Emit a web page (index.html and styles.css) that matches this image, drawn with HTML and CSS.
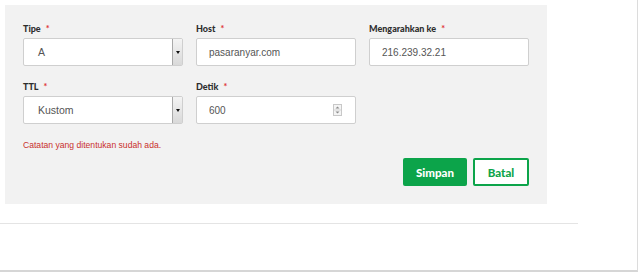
FILE: index.html
```html
<!DOCTYPE html>
<html lang="id">
<head>
    <meta charset="UTF-8">
    <meta name="viewport" content="width=device-width, initial-scale=1.0">
    <title>Edit Record</title>
    <link rel="stylesheet" href="styles.css">
</head>
<body>
    <div class="frame">
        <form class="record-panel">
            <div class="field-grid">
                <div class="field">
                    <label>Tipe <span class="req">*</span></label>
                    <div class="select-box">
                        <span class="select-value">A</span>
                        <span class="select-arrow"><i></i></span>
                    </div>
                </div>
                <div class="field">
                    <label>Host <span class="req">*</span></label>
                    <div class="text-box"><input type="text" value="pasaranyar.com"></div>
                </div>
                <div class="field">
                    <label>Mengarahkan ke <span class="req">*</span></label>
                    <div class="text-box"><input type="text" value="216.239.32.21"></div>
                </div>
                <div class="field">
                    <label>TTL <span class="req">*</span></label>
                    <div class="select-box">
                        <span class="select-value">Kustom</span>
                        <span class="select-arrow"><i></i></span>
                    </div>
                </div>
                <div class="field">
                    <label>Detik <span class="req">*</span></label>
                    <div class="text-box">
                        <input type="text" value="600">
                        <span class="spinner">
                            <svg width="9" height="12" viewBox="0 0 9 12">
                                <rect x="0.5" y="0.5" width="8" height="11" fill="#f4f4f4" stroke="#c8c8c8"/>
                                <line x1="1" y1="6" x2="8" y2="6" stroke="#d4d4d4"/>
                                <path d="M2.5 4.5 L4.5 2.5 L6.5 4.5 Z" fill="#8a8a8a"/>
                                <path d="M2.5 7.5 L4.5 9.5 L6.5 7.5 Z" fill="#8a8a8a"/>
                            </svg>
                        </span>
                    </div>
                </div>
            </div>

            <p class="error-msg">Catatan yang ditentukan sudah ada.</p>

            <div class="actions">
                <button type="button" class="btn btn-save">Simpan</button>
                <button type="button" class="btn btn-cancel">Batal</button>
            </div>
        </form>

        <div class="divider"></div>
    </div>
</body>
</html>
```

FILE: styles.css
```css
body {
    margin: 0;
    background: #fff;
    font-family: "Liberation Sans", Arial, sans-serif;
}

.frame {
    width: 638px;
    height: 272px;
    border-right: 1px solid #dcdcdc;
    border-bottom: 2px solid #d6d6d6;
    padding-top: 5px;
    box-sizing: border-box;
}

.record-panel {
    margin: 0 0 0 5px;
    width: 542px;
    height: 199px;
    box-sizing: border-box;
    background: #f2f2f2;
    padding: 18px 18px 0 18px;
}

.field-grid {
    display: grid;
    grid-template-columns: 160px 160px 160px;
    column-gap: 13px;
    row-gap: 15px;
}

.field label {
    display: block;
    font-family: Lato, "Open Sans", sans-serif;
    font-weight: 900;
    font-size: 9px;
    line-height: 12px;
    height: 12px;
    color: #2e2e2e;
    margin-bottom: 3px;
}

.req {
    color: #e03a3a;
    margin-left: 3px;
}

.select-box,
.text-box {
    display: flex;
    align-items: center;
    height: 28px;
    box-sizing: border-box;
    background: #fff;
    border: 1px solid #cfcfcf;
    border-radius: 2px;
}

.select-value {
    flex: 1;
    padding-left: 14px;
    font-size: 10.5px;
    color: #555;
}

.select-arrow {
    display: flex;
    align-items: center;
    justify-content: center;
    width: 9px;
    height: 100%;
    border-left: 1px solid #a9a9a9;
    background: linear-gradient(#f4f4f4, #d9d9d9);
}

.select-arrow i {
    width: 0;
    height: 0;
    border-left: 2px solid transparent;
    border-right: 2px solid transparent;
    border-top: 3px solid #111;
}

.text-box input {
    flex: 1;
    min-width: 0;
    border: none;
    outline: none;
    background: transparent;
    padding: 0 0 0 12px;
    font-family: "Liberation Sans", Arial, sans-serif;
    font-size: 10px;
    color: #555;
}

.spinner {
    display: flex;
    margin-right: 13px;
}

.error-msg {
    margin: 15px 0 0;
    font-size: 8.6px;
    line-height: 12px;
    color: #c9302c;
}

.actions {
    display: flex;
    justify-content: flex-end;
    gap: 6px;
    margin-top: 7px;
}

.btn {
    height: 28px;
    box-sizing: border-box;
    border-radius: 2px;
    font-family: Lato, "Open Sans", sans-serif;
    font-weight: 900;
    font-size: 11.5px;
    cursor: pointer;
    padding: 0;
}

.btn-save {
    width: 64px;
    background: #0ca44a;
    border: none;
    color: #fff;
}

.btn-cancel {
    width: 56px;
    background: #fff;
    border: 2px solid #0ca44a;
    color: #0ca44a;
}

.divider {
    width: 578px;
    margin-top: 19px;
    border-top: 1px solid #e4e4e4;
}
```
